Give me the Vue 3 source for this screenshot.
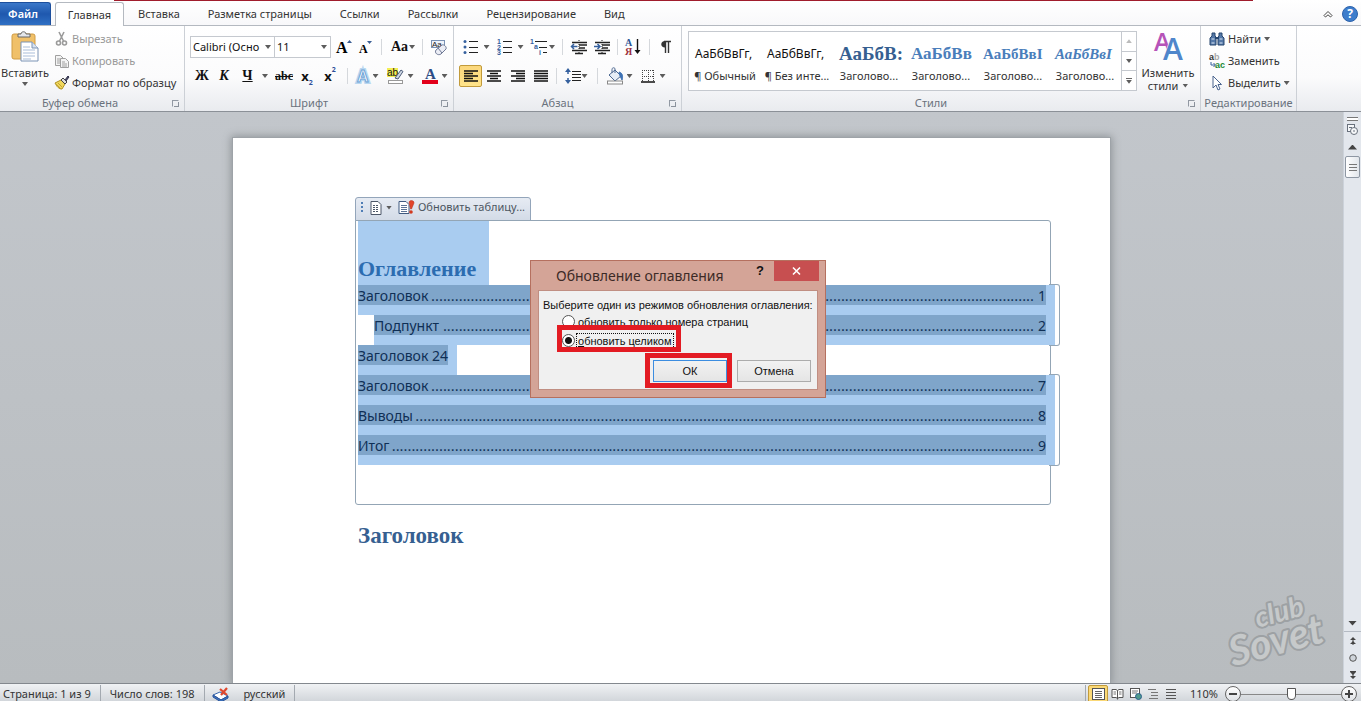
<script setup>
import { ref } from 'vue'

const tabs = ['Вставка', 'Разметка страницы', 'Ссылки', 'Рассылки', 'Рецензирование', 'Вид']
const styles = [
  { sample: 'АаБбВвГг,', name: '¶ Обычный', kind: 'plain' },
  { sample: 'АаБбВвГг,', name: '¶ Без инте...', kind: 'plain' },
  { sample: 'АаБбВ:', name: 'Заголово...', kind: 'h1' },
  { sample: 'АаБбВв', name: 'Заголово...', kind: 'h2' },
  { sample: 'АаБбВвІ', name: 'Заголово...', kind: 'h3' },
  { sample: 'АаБбВвІ', name: 'Заголово...', kind: 'h4' },
]
const firstRun = [
  { title: 'Заголовок', page: '1', dots: 153 },
  { title: 'Подпункт', page: '2', dots: 150, sub: true },
]
const secondRun = [
  { title: 'Заголовок', page: '7', dots: 153 },
  { title: 'Выводы', page: '8', dots: 157 },
  { title: 'Итог', page: '9', dots: 163 },
]
const mode = ref('all')
const zoom = ref(50)
</script>

<template>
  <div class="app">
    <nav class="tabs">
      <button class="file">Файл</button>
      <button class="tab active">Главная</button>
      <button v-for="t in tabs" :key="t" class="tab">{{ t }}</button>
      <span class="accent"></span>
      <span class="tab-tools">
        <button class="bare" aria-label="Свернуть ленту">
          <svg width="10" height="8" viewBox="0 0 10 8"><path d="M1 5.500 5 1.500 9 5.500 7.500 7 5 4.800 2.500 7Z" fill="#fff" stroke="#444" /></svg>
        </button>
        <button class="help" aria-label="Справка">?</button>
      </span>
    </nav>

    <header class="ribbon">
      <section class="group clipboard">
        <div class="body clip-body">
          <button class="big paste">
            <svg width="28" height="31" viewBox="0 0 28 31">
              <rect x="1" y="3" width="23" height="25" rx="2" fill="#f0c069" stroke="#d09c45" />
              <path d="M7 6V3h3c0-3 5-3 5 0h4v3Z" fill="#e4e6ea" stroke="#666" />
              <path d="M10 11h11l6 6v13H10Z" fill="#fff" stroke="#7b93b5" />
              <path d="M21 11v6h6" fill="#d7e2f0" stroke="#7b93b5" />
              <path d="M12 16h7M12 19h12M12 22h12M12 25h12M12 28h8" stroke="#a9bdd9" />
            </svg>
            <span>Вставить</span>
            <i class="caret"></i>
          </button>
          <div class="stack">
            <button class="line off">
              <svg width="16" height="16" viewBox="0 0 16 16" fill="none" stroke="#9a9a9a" stroke-width="1.600"><path d="M5 1l4.500 9M10 1 5.500 10" /><circle cx="4.500" cy="12" r="2" /><circle cx="10.500" cy="12" r="2" /></svg>
              <span>Вырезать</span>
            </button>
            <button class="line off">
              <svg width="16" height="16" viewBox="0 0 16 16" fill="#f4f4f4" stroke="#a0a0a0"><path d="M1.500 2.500h5l3 3v7h-8Z" /><path d="M6.500 5.500h5l3 3v6h-8Z" /><path d="M3 6h3M3 8h3M3 10h3M8 9h3M8 11h5M8 13h5" /></svg>
              <span>Копировать</span>
            </button>
            <button class="line">
              <svg width="16" height="16" viewBox="0 0 16 16"><path d="M1 8 7 5l4 4-3 5c-3 0-5-2-7-6Z" fill="#f0d75c" stroke="#b09222" /><path d="M2 9l5 5M4 8l4 4" stroke="#c3a433" /><path d="M7 5 9 3l4 4-2 2Z" fill="#ddd" stroke="#444" /><path d="m11 5 3-4 1 1-3 4" fill="#4b4b66" stroke="#33334d" /></svg>
              <span>Формат по образцу</span>
            </button>
          </div>
        </div>
        <footer class="cap">Буфер обмена<i class="launch"></i></footer>
      </section>

      <section class="group font">
        <div class="body">
          <div class="row font-a">
            <span class="combo"><select aria-label="Шрифт"><option>Calibri (Осно</option></select><i class="caret"></i></span>
            <span class="combo"><select aria-label="Размер"><option>11</option></select><i class="caret"></i></span>
            <button class="ic" aria-label="Увеличить размер"><svg width="16" height="18" viewBox="0 0 16 18"><text x="0" y="15" class="serif" font-size="16">A</text><path d="M11 5l2.500-3L16 5Z" fill="#3b5f95" /></svg></button>
            <button class="ic" aria-label="Уменьшить размер"><svg width="14" height="18" viewBox="0 0 14 18"><text x="0" y="15" class="serif" font-size="12">A</text><path d="M8 3h5l-2.500 3Z" fill="#3b5f95" /></svg></button>
            <i class="sep"></i>
            <button class="ic near"><span class="aa">Aa</span><i class="caret"></i></button>
            <i class="sep"></i>
            <button class="ic" aria-label="Очистить формат"><svg width="18" height="18" viewBox="0 0 18 18"><rect x="1.500" y="2.500" width="13" height="7" fill="#eef3fa" stroke="#7a92b5" /><text x="2" y="9" font-size="8" class="sans" fill="#222">Aa</text><path d="m6 12 6-5c2-1 5 2 4 4l-5 5c-3 2-7-1-5-4Z" fill="#eceef6" stroke="#6e7894" /><path d="m8 10 4 5" stroke="#6e7894" /></svg></button>
          </div>
          <div class="row font-b">
            <button class="ic bold">Ж</button>
            <button class="ic bold ital">К</button>
            <button class="ic bold under">Ч</button>
            <i class="caret"></i>
            <button class="ic strike">abc</button>
            <button class="ic script">x<sub>2</sub></button>
            <button class="ic script">x<sup>2</sup></button>
            <i class="sep"></i>
            <button class="ic near" aria-label="Эффекты"><svg width="18" height="18" viewBox="0 0 18 18"><text x="3" y="15" font-size="16" class="sansb" fill="#fff" stroke="#b9d7f0" stroke-width="4">A</text><text x="3" y="15" font-size="16" class="sansb" fill="#fff" stroke="#6da3d6" stroke-width="1">A</text></svg><i class="caret"></i></button>
            <button class="ic mid" aria-label="Выделение"><svg width="18" height="18" viewBox="0 0 18 18"><rect x="0" y="1" width="11" height="9" fill="#f4ee54" /><text x="0" y="9" font-size="10" class="sans" fill="#111">ab</text><path d="m8 11 6-8 2 1.500-5 7.500Z" fill="#cdd6e4" stroke="#4d5c78" /><rect x="1.500" y="13.500" width="14" height="3" fill="#fff" stroke="#999" /></svg><i class="caret"></i></button>
            <button class="ic mid" aria-label="Цвет"><svg width="18" height="18" viewBox="0 0 18 18"><text x="4" y="12" font-size="15" class="serif" fill="#2c4d86">A</text><rect x="1" y="13" width="16" height="4" fill="#e2001a" /></svg><i class="caret"></i></button>
          </div>
        </div>
        <footer class="cap">Шрифт<i class="launch"></i></footer>
      </section>

      <section class="group para">
        <div class="body">
          <div class="row para-a">
            <button class="ic wide" aria-label="Маркеры"><svg width="16" height="16" viewBox="0 0 16 16"><path d="M6 2.500h9M6 8.500h9M6 13.500h9" stroke="#222" /><circle cx="2" cy="2.500" r="1.500" fill="#35609e" /><circle cx="2" cy="8" r="1.500" fill="#35609e" /><circle cx="2" cy="13.500" r="1.500" fill="#35609e" /></svg><i class="caret"></i></button>
            <button class="ic wide" aria-label="Нумерация"><svg width="16" height="16" viewBox="0 0 16 16"><path d="M6 2.500h9M6 8.500h9M6 13.500h9" stroke="#222" /><g class="num"><text x="0" y="5">1</text><text x="0" y="11">2</text><text x="0" y="16">3</text></g></svg><i class="caret"></i></button>
            <button class="ic near" aria-label="Многоуровневый список"><svg width="18" height="16" viewBox="0 0 18 16"><path d="M5 2.500h12M9 8.500h8M13 13.500h4" stroke="#222" /><g class="num"><text x="0" y="5">1</text><text x="4" y="10">a</text><text x="9" y="16">i</text></g></svg><i class="caret"></i></button>
            <i class="sep"></i>
            <button class="ic" aria-label="Уменьшить отступ"><svg width="16" height="16" viewBox="0 0 16 16"><path d="M1 3.500h15M8 6h8M8 9h6M1 11.500h15M4 14.500h8" stroke="#222" stroke-width="1.400" /><path d="M8 1v14" stroke="#222" stroke-dasharray="1 1" /><path d="M6.500 7.500h-6M3 5 .5 7.500 3 10" fill="none" stroke="#35609e" stroke-width="1.500" /></svg></button>
            <button class="ic" aria-label="Увеличить отступ"><svg width="16" height="16" viewBox="0 0 16 16"><path d="M1 3.500h15M8 6h8M8 9h6M1 11.500h15M4 14.500h8" stroke="#222" stroke-width="1.400" /><path d="M8 1v14" stroke="#222" stroke-dasharray="1 1" /><path d="M0 7.500h6M3.500 5 6 7.500 3.500 10" fill="none" stroke="#35609e" stroke-width="1.500" /></svg></button>
            <i class="sep"></i>
            <button class="ic" aria-label="Сортировка"><svg width="16" height="18" viewBox="0 0 16 18"><text x="0" y="8" font-size="10" class="serif" fill="#2d5795">А</text><text x="0" y="17" font-size="10" class="serif" fill="#9c2f3c">Я</text><path d="M12.500 1v13" stroke="#111" stroke-width="1.400" /><path d="M9.500 12h6l-3 4Z" fill="#111" /></svg></button>
            <i class="sep"></i>
            <button class="ic" aria-label="Знаки"><svg width="12" height="14" viewBox="0 0 12 14"><path d="M5 1C0 1 0 7.500 5 7.500Z" fill="#333" /><path d="M4 1.500h7M5.500 1v12M8.500 1v12" stroke="#333" stroke-width="1.400" /></svg></button>
          </div>
          <div class="row para-b">
            <button class="ic picked" aria-label="По левому краю"><svg width="14" height="12" viewBox="0 0 14 12"><path d="M0 1h14M0 3.500h9M0 6h14M0 8.500h9M0 11h14" stroke="#111" stroke-width="1.300" /></svg></button>
            <button class="ic" aria-label="По центру"><svg width="14" height="12" viewBox="0 0 14 12"><path d="M0 1h14M3 3.500h8M0 6h14M3 8.500h8M0 11h14" stroke="#111" stroke-width="1.300" /></svg></button>
            <button class="ic" aria-label="По правому краю"><svg width="14" height="12" viewBox="0 0 14 12"><path d="M0 1h14M5 3.500h9M0 6h14M5 8.500h9M0 11h14" stroke="#111" stroke-width="1.300" /></svg></button>
            <button class="ic" aria-label="По ширине"><svg width="14" height="12" viewBox="0 0 14 12"><path d="M0 1h14M0 3.500h14M0 6h14M0 8.500h14M0 11h14" stroke="#111" stroke-width="1.300" /></svg></button>
            <i class="sep"></i>
            <button class="ic near" aria-label="Интервал"><svg width="16" height="16" viewBox="0 0 16 16"><path d="M7 3.500h9M7 6.500h9M7 9.500h9M7 12.500h9" stroke="#222" /><path d="M3 3v3M3 10v3" stroke="#35609e" stroke-width="1.500" /><path d="M0 4 3 0l3 4ZM0 12l3 4 3-4Z" fill="#35609e" /></svg><i class="caret"></i></button>
            <i class="sep"></i>
            <button class="ic mid" aria-label="Заливка"><svg width="18" height="18" viewBox="0 0 18 18"><path d="m3 8 6-5 6 6-6 5Z" fill="#e6edf6" stroke="#4a6690" /><path d="M9 6V1.500C7 0 6 1 6 3v3" fill="none" stroke="#4a6690" /><path d="M13 5c4 1 4 5 3 8l-2-4Z" fill="#3e72b5" stroke="#3e72b5" /><rect x="1.500" y="14" width="15" height="3" fill="#fff" stroke="#888" /></svg><i class="caret"></i></button>
            <button class="ic wide" aria-label="Границы"><svg width="14" height="14" viewBox="0 0 14 14"><path d="M1 1.500h12M1 7.500h12M1.500 1v12M7.500 1v12M12.500 1v12" stroke="#444" stroke-dasharray="1 1" /><path d="M0 13h14" stroke="#111" stroke-width="1.500" /></svg><i class="caret"></i></button>
          </div>
        </div>
        <footer class="cap">Абзац<i class="launch"></i></footer>
      </section>

      <section class="group style-group">
        <div class="body style-body">
          <div class="gallery">
            <button v-for="(s, i) in styles" :key="i" class="style-item">
              <span class="sample" :class="s.kind">{{ s.sample }}</span>
              <span class="style-name">{{ s.name }}</span>
            </button>
            <div class="gallery-nav">
              <button class="nav" aria-label="Вверх"><i class="caret up dim"></i></button>
              <button class="nav" aria-label="Вниз"><i class="caret"></i></button>
              <button class="nav more" aria-label="Ещё"><i class="caret"></i></button>
            </div>
          </div>
          <button class="big change">
            <svg width="32" height="29" viewBox="0 0 32 29"><text x="2" y="19" font-size="25" class="letter" fill="#b653b8">A</text><text x="11" y="28" font-size="30" class="letter" fill="#4f86cb" stroke="#fff" stroke-width="1" paint-order="stroke">A</text></svg>
            <span>Изменить</span>
            <span class="with-caret">стили<i class="caret"></i></span>
          </button>
        </div>
        <footer class="cap">Стили<i class="launch"></i></footer>
      </section>

      <section class="group edit">
        <div class="body">
          <div class="stack">
            <button class="line">
              <svg width="16" height="14" viewBox="0 0 16 14"><path d="M3 1h3v3l1 1v8H1V6l2-2ZM10 1h3v3l2 2v7H9V5l1-1Z" fill="#5478a8" stroke="#27466f" /><path d="M2.500 7h3M10.500 7h3M2.500 11h3M10.500 11h3" stroke="#dbe6f3" /><path d="M6 6h4" stroke="#27466f" stroke-width="2" /></svg>
              <span>Найти</span><i class="caret"></i>
            </button>
            <button class="line">
              <svg width="16" height="16" viewBox="0 0 16 16"><text x="0" y="7" font-size="9" class="sansb" fill="#333">a<tspan fill="#aaa">b</tspan></text><path d="M2 9v3h4M4.500 10l2 2-2 2" fill="none" stroke="#35609e" /><text x="6" y="15" font-size="9" class="sansb" fill="#1b8a35">ac</text></svg>
              <span>Заменить</span>
            </button>
            <button class="line">
              <svg width="16" height="16" viewBox="0 0 16 16"><path d="M4 1v12l3-3 2 5 2-1-2-4.500h3.500Z" fill="#fff" stroke="#4a648f" /></svg>
              <span>Выделить</span><i class="caret"></i>
            </button>
          </div>
        </div>
        <footer class="cap">Редактирование</footer>
      </section>
    </header>

    <main class="desk">
      <div class="canvas">
        <article class="sheet">
          <div class="toc">
            <div class="toc-tab">
              <i class="grip"></i>
              <button class="bare with-caret" aria-label="Оглавление">
                <svg width="12" height="14" viewBox="0 0 12 14"><path d="M1 .5h7l3 3v10H1Z" fill="#fff" stroke="#4c5768" /><path d="M3 4.500h6M3 6.500h6M3 8.500h6M3 10.500h6" stroke="#4c5768" stroke-dasharray="2 1" /></svg>
                <i class="caret"></i>
              </button>
              <button class="bare update">
                <svg width="17" height="15" viewBox="0 0 17 15"><path d="M1 1.500h7l3 3v9H1Z" fill="#fff" stroke="#3f5a80" /><path d="M3 5.500h6M3 7.500h6M3 9.500h6M3 11.500h6" stroke="#5b7396" /><path d="M11 2c1-2 5-2 5 1L13.500 9h-1Z" fill="#e2452b" stroke="#b32a17" stroke-width=".5" /><circle cx="13" cy="12" r="1.800" fill="#d23a20" /></svg>
                <span>Обновить таблицу...</span>
              </button>
            </div>
            <div class="frame">
              <h1 class="toc-title"><span>Оглавление</span></h1>
              <div class="run">
                <a v-for="r in firstRun" :key="r.page" href="#" class="entry" :class="{ sub: r.sub }">
                  <span class="strip"><span>{{ r.title }}</span><span class="leader">{{ '.'.repeat(r.dots) }}</span><span class="num-page">{{ r.page }}</span></span>
                </a>
              </div>
              <a href="#" class="entry short"><span class="strip">Заголовок 24</span></a>
              <div class="run">
                <a v-for="r in secondRun" :key="r.page" href="#" class="entry">
                  <span class="strip"><span>{{ r.title }}</span><span class="leader">{{ '.'.repeat(r.dots) }}</span><span class="num-page">{{ r.page }}</span></span>
                </a>
              </div>
            </div>
          </div>
          <h2 class="heading">Заголовок</h2>

          <div class="dialog" role="dialog" aria-labelledby="dlg-title">
            <div class="dlg-bar">
              <span id="dlg-title" class="dlg-title">Обновление оглавления</span>
              <button class="dlg-help" aria-label="Справка">?</button>
              <button class="dlg-close" aria-label="Закрыть"><svg width="9" height="8" viewBox="0 0 9 8"><path d="m1 .5 7 7M8 .5l-7 7" stroke="#fff" stroke-width="1.600" /></svg></button>
            </div>
            <form class="dlg-body" @submit.prevent>
              <p>Выберите один из режимов обновления оглавления:</p>
              <label class="opt"><input v-model="mode" type="radio" name="mode" value="pages" /><span>обновить только номера страниц</span></label>
              <label class="opt marked"><input v-model="mode" type="radio" name="mode" value="all" /><span class="focus"><u>о</u>бновить целиком</span></label>
              <div class="dlg-actions">
                <span class="ok-wrap"><button class="btn ok">ОК</button></span>
                <button class="btn" type="button">Отмена</button>
              </div>
            </form>
          </div>
        </article>
        <svg class="mark" width="104" height="74" viewBox="0 0 104 74" role="img" aria-label="club Sovet">
          <g transform="rotate(-15 52 40)" fill="#c6c9ca" stroke="#9da1a4" stroke-width="4" paint-order="stroke" stroke-linejoin="round">
            <text x="35" y="29" font-size="28" class="brand">club</text>
            <text x="1" y="60" font-size="41" class="brand">Sovet</text>
          </g>
        </svg>
      </div>
      <aside class="scroll">
        <i class="split"></i>
        <button class="bare ruler" aria-label="Линейка"><svg width="13" height="13" viewBox="0 0 13 13" fill="#f6f8fa" stroke="#68707c"><rect x="1.500" y="1.500" width="7" height="7" /><circle cx="8" cy="8" r="3.500" /><path d="M3 4.500h3M7 8h2" /></svg></button>
        <button class="bare arrow" aria-label="Вверх"><i class="tri up"></i></button>
        <div class="thumb"><i></i></div>
        <div class="track"></div>
        <button class="bare arrow" aria-label="Вниз"><i class="tri"></i></button>
        <div class="browse">
          <button class="bare" aria-label="Назад"><svg width="8" height="8" viewBox="0 0 8 8" fill="#444"><path d="M4 0 7 3H1ZM4 4l3 3H1Z" /><path d="M3.500 2h1v6h-1Z" /></svg></button>
          <button class="bare" aria-label="Объект"><svg width="8" height="8" viewBox="0 0 8 8"><circle cx="4" cy="4" r="3.300" fill="#cfd4da" stroke="#555" /></svg></button>
          <button class="bare" aria-label="Далее"><svg width="8" height="8" viewBox="0 0 8 8" fill="#444"><path d="M4 8 1 5h6ZM4 4 1 1h6Z" /><path d="M3.500 0h1v6h-1ZM1 0h6v1H1Z" /></svg></button>
        </div>
      </aside>
    </main>

    <footer class="status">
      <button class="cell first">Страница: 1 из 9</button>
      <button class="cell">Число слов: 198</button>
      <button class="cell lang">
        <svg width="18" height="15" viewBox="0 0 18 15"><path d="m1 8 7-3 8 4-7 4Z" fill="#fff" stroke="#3565ad" /><path d="m1 8v2l8 5 7-4V9l-7 4Z" fill="#3e74c2" stroke="#2b5599" /><path d="m8 2 7 6M15 1 9 8" stroke="#e0482d" stroke-width="2.200" /></svg>
        <span>русский</span>
      </button>
      <div class="views">
        <button class="view on" aria-label="Разметка"><svg width="13" height="12" viewBox="0 0 13 12"><rect x=".5" y=".5" width="12" height="11" fill="#fff" stroke="#555" /><path d="M3 3.500h7M3 5.500h7M3 7.500h7M3 9.500h7" stroke="#666" /></svg></button>
        <button class="view" aria-label="Чтение"><svg width="13" height="12" viewBox="0 0 13 12"><path d="M1 1.500h4l1.500 1 1.500-1h4v8H8l-1.500 1-1.500-1H1ZM6.500 2.500v9" fill="#fff" stroke="#555" /><path d="M2.500 4h2.500M2.500 6h2.500M8 4h2.500M8 6h2.500" stroke="#777" /></svg></button>
        <button class="view" aria-label="Веб"><svg width="13" height="12" viewBox="0 0 13 12"><rect x="1.500" y=".5" width="9" height="9" fill="#fff" stroke="#555" /><path d="M3 3h6M3 5h5" stroke="#777" /><circle cx="9.500" cy="8.500" r="3" fill="#4f9a8c" stroke="#2c5f8c" /></svg></button>
        <button class="view" aria-label="Структура"><svg width="13" height="12" viewBox="0 0 13 12"><path d="M1 1.500h8M4 4.500h7M4 7.500h7M2 10.500h9" stroke="#777" /></svg></button>
        <button class="view" aria-label="Черновик"><svg width="13" height="12" viewBox="0 0 13 12"><path d="M1 1.500h10M1 4.500h10M1 7.500h10M1 10.500h10" stroke="#555" /></svg></button>
      </div>
      <button class="bare percent">110%</button>
      <button class="round" aria-label="Уменьшить"><svg width="8" height="8" viewBox="0 0 8 8"><path d="M0 4h8" stroke="#444" stroke-width="2" /></svg></button>
      <input v-model="zoom" class="slider" type="range" min="0" max="100" aria-label="Масштаб" />
      <button class="round" aria-label="Увеличить"><svg width="8" height="8" viewBox="0 0 8 8"><path d="M0 4h8M4 0v8" stroke="#444" stroke-width="2" /></svg></button>
    </footer>
  </div>
</template>

<style>
html,
body {
  margin: 0;
  overflow: hidden;
}
</style>

<style scoped>
* {
  box-sizing: border-box;
}
.app {
  height: 100vh;
  display: flex;
  flex-direction: column;
  overflow: hidden;
  font: 11px/14px "Noto Sans", "Open Sans", sans-serif;
  color: #333;
}
button {
  font: inherit;
  color: inherit;
  border: 0;
  padding: 0;
  background: none;
  white-space: nowrap;
}
svg {
  display: block;
  flex: none;
  overflow: visible;
}
.serif {
  font-family: "Liberation Serif", serif;
  font-weight: bold;
}
.sans {
  font-family: "Liberation Sans", sans-serif;
}
.sansb {
  font-family: "Liberation Sans", sans-serif;
  font-weight: bold;
}
.letter {
  font-family: "Open Sans", sans-serif;
  font-weight: 600;
}
.num text {
  font: bold 7px "Liberation Sans", sans-serif;
  fill: #35609e;
}
.bare {
  display: flex;
  align-items: center;
  justify-content: center;
}
.caret {
  flex: none;
  width: 6px;
  height: 4px;
  background: #5c5c5c;
  clip-path: polygon(0 0, 100% 0, 50% 100%);
}
.caret.up {
  clip-path: polygon(0 100%, 100% 100%, 50% 0);
}
.caret.dim {
  background: #bbb;
}
.with-caret {
  display: flex;
  align-items: center;
  gap: 4px;
}

/* tab strip */
.tabs {
  position: relative;
  flex: none;
  display: flex;
  align-items: flex-end;
  height: 26px;
  background: linear-gradient(#fff, #f8f8fa);
  border-bottom: 1px solid #b4b9c0;
}
.accent {
  position: absolute;
  top: 0;
  left: 114px;
  right: 108px;
  height: 1px;
  background: #a01c2c;
}
.file {
  width: 51px;
  height: 23px;
  margin-right: 4px;
  padding-right: 4px;
  color: #fff;
  font-weight: 600;
  border-radius: 0 3px 0 0;
  border: 1px solid #1c4f9d;
  border-left: 0;
  border-bottom: 0;
  background: linear-gradient(#3b78c9, #1f58ae 50%, #2f70c4);
}
.tab {
  height: 23px;
  padding: 0 14px;
}
.tab.active {
  height: 24px;
  width: 69px;
  padding: 0;
  margin: 0 0 -1px;
  background: #fff;
  border: 1px solid #b4b9c0;
  border-bottom: 0;
  border-radius: 3px 3px 0 0;
}
.tab-tools {
  display: flex;
  align-items: center;
  gap: 9px;
  height: 23px;
  margin-left: auto;
  padding-right: 3px;
}
.help {
  width: 16px;
  height: 16px;
  border-radius: 50%;
  background: #3d7dcc;
  border: 1px solid #2c62ab;
  color: #fff;
  font-weight: bold;
  font-size: 12px;
  line-height: 14px;
}

/* ribbon */
.ribbon {
  flex: none;
  display: flex;
  height: 86px;
  background: linear-gradient(#fff, #fbfbfc 60%, #e9ebef);
  border-bottom: 1px solid #8b9097;
}
.group {
  display: flex;
  flex-direction: column;
  border-right: 1px solid #ccd0d6;
}
.body {
  height: 69px;
}
.clipboard {
  width: 185px;
}
.font {
  width: 269px;
}
.para {
  width: 228px;
}
.style-group {
  width: 519px;
}
.edit {
  width: 96px;
}
.cap {
  position: relative;
  height: 16px;
  line-height: 16px;
  text-align: center;
  color: #6a727d;
  padding-right: 20px;
}
.clipboard .cap {
  padding-right: 24px;
}
.edit .cap {
  padding: 0;
}
.launch {
  position: absolute;
  right: 5px;
  top: 5px;
  width: 7px;
  height: 7px;
  border: 1px solid #9299a3;
  border-right-color: transparent;
  border-bottom-color: transparent;
}
.launch::after {
  content: "";
  position: absolute;
  right: -1px;
  bottom: -1px;
  width: 4px;
  height: 4px;
  border: 1px solid #8a919b;
  border-top: 0;
  border-left: 0;
}
.clip-body,
.style-body {
  display: flex;
}
.big {
  display: flex;
  flex-direction: column;
  align-items: center;
  line-height: 13px;
}
.paste {
  width: 50px;
  padding-top: 5px;
}
.paste span {
  margin: 4px 0 3px;
}
.stack {
  padding: 2px 0 0 4px;
}
.edit .stack {
  padding-left: 8px;
}
.line {
  display: flex;
  align-items: center;
  gap: 2px;
  height: 22px;
}
.edit .line {
  gap: 3px;
}
.off {
  color: #999;
}
.row {
  display: grid;
  align-items: center;
  height: 22px;
  margin: 10px 0 0 5px;
}
.row + .row {
  margin-top: 7px;
}
.font-a {
  grid-template-columns: 85px 56px 26px 18px 12px 32px 6px 28px;
}
.font-b {
  grid-template-columns: 24px 20px 27px 8px 30px 16px 30px 4px 34px 34px 34px;
}
.para-a {
  grid-template-columns: 34px 34px 31px 8px 26px 20px 10px 22px 10px 24px;
}
.para-b {
  grid-template-columns: 23px 24px 24px 22px 8px 32px 10px 34px 34px;
}
.row > .caret,
.sep {
  justify-self: center;
}
.sep {
  width: 1px;
  height: 16px;
  background: #d5d8dc;
}
.ic {
  display: flex;
  align-items: center;
  justify-content: center;
  height: 22px;
  color: #111;
}
.near {
  gap: 1px;
}
.mid {
  gap: 3px;
}
.wide {
  gap: 5px;
}
.picked {
  border: 1px solid #c29b3b;
  border-radius: 2px;
  background: linear-gradient(#fbd77c, #ffe48a);
}
.combo {
  position: relative;
  display: flex;
  align-items: center;
  height: 22px;
}
.combo + .combo {
  margin-left: -1px;
}
.combo select {
  width: 100%;
  height: 22px;
  appearance: none;
  border: 1px solid #c5c9cf;
  border-radius: 0;
  background: #fff;
  padding: 0 2px;
  font: inherit;
  color: #111;
}
.combo .caret {
  position: absolute;
  right: 4px;
}
.aa {
  font: bold 14px "Liberation Serif", serif;
}
.bold {
  font: bold 14px "Liberation Serif", serif;
}
.ital {
  font-style: italic;
}
.under {
  text-decoration: underline;
}
.strike {
  font: bold 12px "Liberation Serif", serif;
  text-decoration: line-through;
}
.script {
  font: bold 13px "Noto Sans", sans-serif;
}
.script sub,
.script sup {
  font-size: 7px;
  line-height: 9px;
  color: #2d4f9a;
}
.script sub {
  align-self: flex-end;
}
.script sup {
  align-self: flex-start;
}
.gallery {
  display: flex;
  height: 60px;
  margin: 5px 0 0 6px;
  border: 1px solid #c5c9cf;
  background: #fff;
}
.style-item {
  display: flex;
  flex-direction: column;
  align-items: center;
  width: 72px;
  padding: 12px 6px 0;
}
.sample {
  width: 60px;
  height: 25px;
  line-height: 20px;
  text-align: left;
  color: #111;
}
.sample.plain {
  font-size: 12px;
}
.sample.h1,
.sample.h2,
.sample.h3,
.sample.h4 {
  font-family: "Liberation Serif", serif;
  font-weight: bold;
  color: #4a7ebb;
}
.sample.h1 {
  font-size: 19px;
  color: #365f91;
}
.sample.h2 {
  font-size: 17px;
}
.sample.h3,
.sample.h4 {
  font-size: 15px;
}
.sample.h4 {
  font-style: italic;
}
.gallery-nav {
  display: flex;
  flex-direction: column;
  width: 15px;
  border-left: 1px solid #c5c9cf;
}
.nav {
  flex: 1;
  display: flex;
  align-items: center;
  justify-content: center;
}
.nav + .nav {
  border-top: 1px solid #c5c9cf;
}
.nav.more {
  flex-direction: column;
  gap: 1px;
}
.nav.more::before {
  content: "";
  width: 6px;
  height: 1px;
  background: #666;
}
.change {
  width: 62px;
  padding-top: 6px;
}
.change svg {
  margin-bottom: 5px;
}

/* document area */
.desk {
  flex: 1;
  min-height: 0;
  display: flex;
}
.canvas {
  position: relative;
  flex: 1;
  padding-top: 26px;
  overflow: hidden;
  background: linear-gradient(#c2c6cb, #b8bcbf);
}
.sheet {
  position: relative;
  width: 877px;
  min-height: 100%;
  margin: 0 auto;
  padding: 59px 59px 0 122px;
  background: #fff;
  box-shadow: 0 0 0 1px #9ea3a8, 0 0 8px 2px #8f9498;
}
.toc-tab {
  display: flex;
  align-items: center;
  width: 176px;
  height: 24px;
  margin-bottom: -1px;
  padding: 0 3px 3px 5px;
  border: 1px solid #93a5ba;
  border-radius: 3px 3px 0 0;
  background: linear-gradient(#e6ebf3, #d3dbe7);
  color: #4c5560;
}
.grip {
  width: 2px;
  height: 11px;
  margin-right: 7px;
  background: repeating-linear-gradient(#4f7db5 0 2px, transparent 2px 4px);
}
.update {
  gap: 3px;
  margin-left: 6px;
}
.update span {
  padding-bottom: 2px;
}
.frame {
  width: 696px;
  height: 285px;
  padding-left: 2px;
  border: 1px solid #93a5b5;
  border-radius: 0 3px 3px 3px;
}
.toc-title {
  display: flex;
  align-items: flex-end;
  width: 131px;
  height: 64px;
  margin: 0;
  padding-bottom: 3px;
  background: #a9ccf0;
  font: bold 22px/26px "Liberation Serif", serif;
  color: #2c6cb0;
}
.run {
  position: relative;
  margin-right: -5px;
}
.run::after {
  content: "";
  position: absolute;
  top: -1px;
  bottom: -1px;
  right: -5px;
  width: 10px;
  border: 1px solid #93a5b5;
  border-left: 0;
  border-radius: 0 3px 3px 0;
  background: #fff;
}
.entry {
  position: relative;
  z-index: 1;
  display: block;
  height: 30px;
  padding-right: 9px;
  background: #a9ccf0;
  font-size: 14px;
  line-height: 22px;
  color: #0f2f55;
  text-decoration: none;
}
.entry.sub {
  margin-left: 16px;
}
.entry.short {
  width: fit-content;
}
.strip {
  display: flex;
  height: 20px;
  background: #7fa5ca;
}
.leader {
  flex: 1;
  text-align: right;
  white-space: nowrap;
  font: 15px/20px "Open Sans", sans-serif;
}
.num-page {
  width: 12px;
  text-align: right;
}
.heading {
  margin: 18px 0 0 3px;
  font: bold 23px/26px "Liberation Serif", serif;
  color: #365f91;
}
.mark {
  position: absolute;
  right: 14px;
  bottom: 15px;
}
.brand {
  font-family: Lato, "Liberation Sans", sans-serif;
  font-style: italic;
  font-weight: bold;
}

/* dialog */
.dialog {
  position: absolute;
  left: 297px;
  top: 122px;
  z-index: 3;
  width: 296px;
  padding: 0 7px 7px;
  border: 1px solid #b5705f;
  background: #d4a497;
  font-family: "Liberation Sans", sans-serif;
  color: #111;
}
.dlg-bar {
  display: flex;
  height: 29px;
}
.dlg-title {
  flex: 1;
  padding: 5px 0 0 18px;
  font: 14px/20px "Noto Sans", sans-serif;
  color: #3d2a26;
  white-space: nowrap;
}
.dlg-help {
  width: 28px;
  height: 20px;
  font-weight: bold;
  font-size: 13px;
}
.dlg-close {
  display: flex;
  align-items: center;
  justify-content: center;
  width: 45px;
  height: 20px;
  margin-right: -1px;
  background: #c74f50;
}
.dlg-body {
  height: 100px;
  padding: 7px 6px 0 4px;
  border: 1px solid #c08e82;
  background: #f0f0f0;
}
.dlg-body p {
  margin: 0;
  line-height: 14px;
  white-space: nowrap;
}
.opt {
  position: relative;
  display: flex;
  align-items: center;
  gap: 2px;
  width: fit-content;
  height: 19px;
  margin-left: 19px;
}
.opt input {
  appearance: none;
  width: 13px;
  height: 13px;
  margin: 0;
  border: 1px solid #555;
  border-radius: 50%;
  background: #fff;
}
.opt input:checked {
  background: radial-gradient(circle, #111 0 3px, #fff 4px);
}
.opt span {
  padding: 0 1px;
}
.focus {
  outline: 1px dotted #111;
}
.marked::before,
.ok-wrap::before {
  content: "";
  position: absolute;
  z-index: 1;
  border: 5px solid #e31b23;
}
.marked::before {
  inset: -6px -8px -2px -5px;
}
.dlg-actions {
  display: flex;
  justify-content: flex-end;
  gap: 10px;
  margin-top: 10px;
}
.ok-wrap {
  position: relative;
}
.ok-wrap::before {
  inset: -7px -5px -6px -8px;
}
.btn {
  width: 74px;
  height: 22px;
  border: 1px solid #acacac;
  background: linear-gradient(#f2f2f2, #e5e5e5);
}
.ok {
  border-color: #3c8de0;
}

/* scroll bar */
.scroll {
  display: flex;
  flex-direction: column;
  align-items: center;
  width: 18px;
  border-left: 1px solid #ccd2da;
  background: #e3e7ed;
}
.split {
  width: 11px;
  height: 4px;
  margin: 5px 0 2px;
  border: 1px solid #777;
  border-width: 1px 0;
  background: #fff;
}
.ruler {
  height: 13px;
}
.arrow {
  width: 16px;
  height: 16px;
}
.ruler + .arrow {
  margin: 3px 0 1px;
}
.tri {
  width: 9px;
  height: 5px;
  background: #444;
  clip-path: polygon(0 0, 100% 0, 50% 100%);
}
.tri.up {
  clip-path: polygon(0 100%, 100% 100%, 50% 0);
}
.thumb {
  display: flex;
  align-items: center;
  justify-content: center;
  width: 15px;
  height: 22px;
  border: 1px solid #8e97a3;
  border-radius: 2px;
  background: linear-gradient(90deg, #fff, #e2e6eb);
}
.thumb i {
  width: 8px;
  height: 7px;
  background: repeating-linear-gradient(#777 0 1px, transparent 1px 3px);
}
.track {
  flex: 1;
}
.browse {
  display: flex;
  flex-direction: column;
  align-items: center;
  justify-content: space-around;
  width: 100%;
  height: 52px;
  border-top: 1px solid #b4bac3;
}

/* status bar */
.status {
  flex: none;
  display: flex;
  height: 18px;
  padding-top: 1px;
  border-top: 1px solid #83888e;
  background: linear-gradient(#f0f2f4, #d2d6db);
}
.status > * {
  flex: none;
  height: 18px;
}
.cell {
  padding: 0 9px;
  border-right: 1px solid #a3a9b0;
}
.cell.first {
  padding-left: 3px;
}
.status .lang {
  display: flex;
  align-items: center;
  gap: 14px;
  padding-left: 7px;
}
.views {
  display: flex;
  margin-left: auto;
  padding-left: 2px;
  border-left: 1px solid #a3a9b0;
}
.view {
  display: flex;
  align-items: center;
  justify-content: center;
  width: 18px;
}
.view.on {
  width: 20px;
  border: 1px solid #c29b3b;
  border-radius: 2px;
  background: #fbd977;
}
.percent {
  width: 45px;
  padding-left: 3px;
}
.status .round {
  display: flex;
  align-items: center;
  justify-content: center;
  width: 16px;
  height: 16px;
  margin-top: 1px;
  border: 1px solid #666;
  border-radius: 50%;
  background: linear-gradient(#fff, #dfe2e6);
}
.slider {
  appearance: none;
  width: 100px;
  margin: 0;
  background: linear-gradient(#888, #888) center / 100% 1px no-repeat;
}
.slider::-webkit-slider-thumb {
  appearance: none;
  width: 9px;
  height: 12px;
  border: 1px solid #555;
  border-radius: 1px 1px 5px 5px;
  background: #fff;
}
.status > :last-child {
  margin-right: 4px;
}
</style>
